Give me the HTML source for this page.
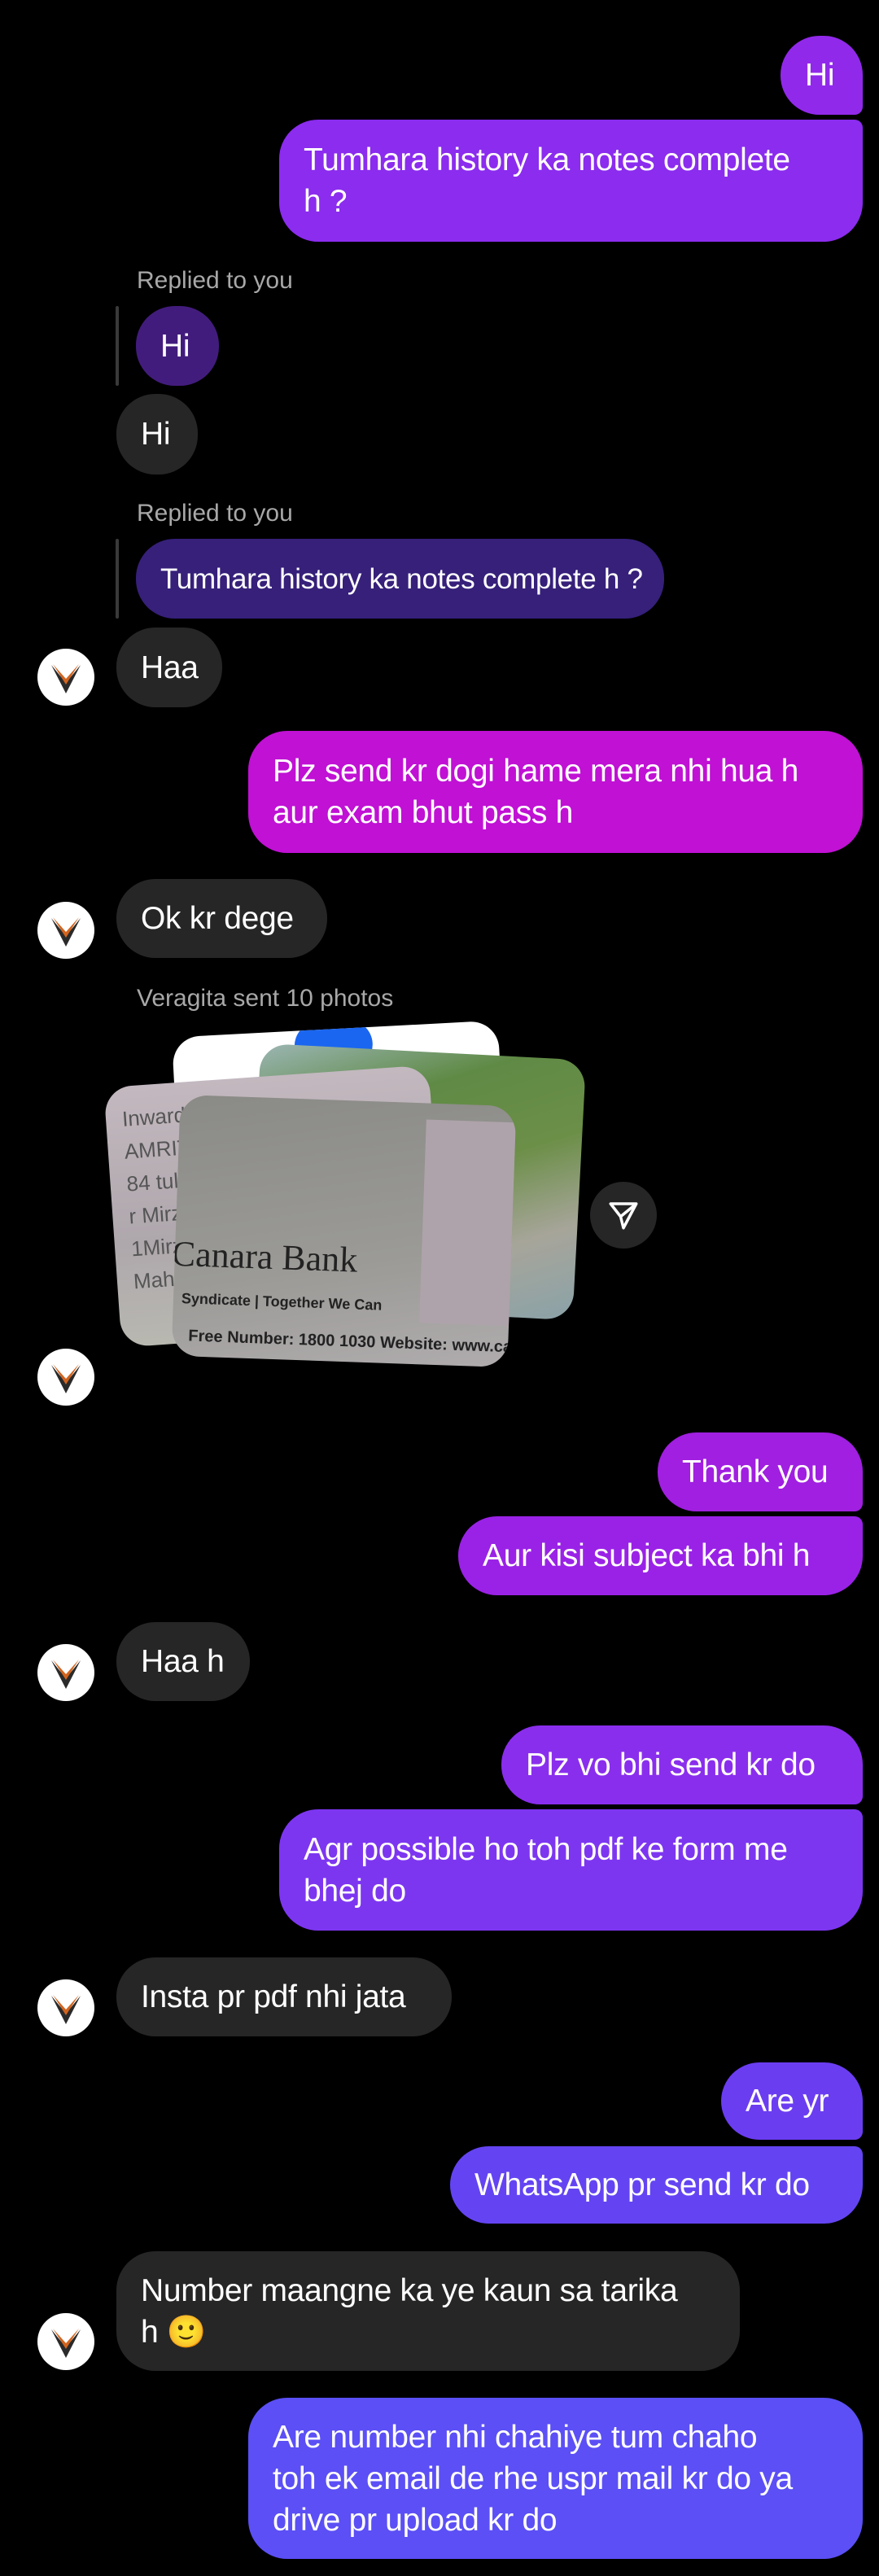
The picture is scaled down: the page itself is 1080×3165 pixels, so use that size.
<!DOCTYPE html>
<html><head><meta charset="utf-8">
<style>
html,body{margin:0;padding:0;background:#000;}
body{width:1080px;height:3165px;position:relative;overflow:hidden;font-family:"Liberation Sans",sans-serif;color:#fff;}
.b{position:absolute;box-sizing:border-box;border-radius:48px;font-size:39px;line-height:51px;padding:0 30px;display:flex;align-items:center;white-space:nowrap;letter-spacing:-0.3px}
.g{background:#262626}
.lbl{position:absolute;left:168px;font-size:30px;color:#a8a8a8}
.ln{position:absolute;left:142px;width:4px;background:#3a3a3a;border-radius:2px}
.av{position:absolute;left:46px;width:70px;height:70px}
.card{position:absolute;border-radius:34px;overflow:hidden}
</style></head><body>

<div class="b" style="left:959px;top:44px;width:101px;height:97px;background:#9129ea;border-bottom-right-radius:10px">Hi</div>
<div class="b" style="left:343px;top:147px;width:717px;height:150px;background:#8b2cee;border-top-right-radius:10px"><div>Tumhara history ka notes complete<br>h ?</div></div>

<div class="lbl" style="top:328px">Replied to you</div>
<div class="ln" style="top:376px;height:98px"></div>
<div class="b" style="left:167px;top:376px;width:102px;height:98px;background:#421c7c">Hi</div>
<div class="b g" style="left:143px;top:484px;width:100px;height:99px">Hi</div>

<div class="lbl" style="top:614px">Replied to you</div>
<div class="ln" style="top:662px;height:98px"></div>
<div class="b" style="left:167px;top:662px;width:649px;height:98px;background:#36207a;font-size:35px">Tumhara history ka notes complete h ?</div>
<div class="b g" style="left:143px;top:771px;width:130px;height:98px">Haa</div>

<div class="b" style="left:305px;top:898px;width:755px;height:150px;background:#c011d4"><div>Plz send kr dogi hame mera nhi hua h<br>aur exam bhut pass h</div></div>
<div class="b g" style="left:143px;top:1080px;width:259px;height:97px">Ok kr dege</div>

<div class="lbl" style="top:1210px">Veragita sent 10 photos</div>
<div class="card" style="left:216px;top:1264px;width:401px;height:200px;background:#fff;transform:rotate(-3deg)"><div style="position:absolute;left:150px;top:-10px;width:96px;height:60px;border-radius:48px;background:#1a66f0"></div></div>
<div class="card" style="left:312px;top:1292px;width:400px;height:320px;transform:rotate(3deg);background:linear-gradient(160deg,#9cb6b5 0%,#5f8a45 25%,#6c8f48 50%,#a7a59a 75%,#8aa2a8 100%)"></div>
<div class="card" style="left:138px;top:1322px;width:400px;height:320px;transform:rotate(-4deg);background:linear-gradient(180deg,#c3b8bf,#aea7ac 60%,#b8b8b0);color:#555;font-size:26px;padding:20px;box-sizing:border-box;line-height:40px">Inward No.<br>AMRITANS<br>84 tulasi c<br>r Mirzapu<br>1Mirzapu<br>Mahuari</div>
<div class="card" style="left:216px;top:1352px;width:413px;height:321px;transform:rotate(2deg);background:linear-gradient(170deg,#8a8a86,#9b9a96 60%,#b0acae)">
<div style="position:absolute;right:0;top:20px;width:110px;height:250px;background:#aea3aa"></div>
<div style="position:absolute;left:-4px;top:170px;font-family:'Liberation Serif',serif;font-size:44px;color:#222">Canara Bank</div>
<div style="position:absolute;left:10px;top:240px;font-size:18px;color:#222;font-weight:bold">Syndicate | Together We Can</div>
<div style="position:absolute;left:20px;top:285px;font-size:20px;color:#222;font-weight:bold;white-space:nowrap">Free Number: 1800 1030 Website: www.ca</div>
</div>
<div style="position:absolute;left:725px;top:1452px;width:82px;height:82px;border-radius:50%;background:#262626"></div>
<svg style="position:absolute;left:745px;top:1472px" width="42" height="42" viewBox="0 0 24 24" fill="none" stroke="#fff" stroke-width="2" stroke-linejoin="round"><path d="M3 4h18l-9 17-2-8z M10 13l11-9"/></svg>

<div class="b" style="left:808px;top:1760px;width:252px;height:97px;background:#a01fe0;border-bottom-right-radius:10px">Thank you</div>
<div class="b" style="left:563px;top:1863px;width:497px;height:97px;background:#9a22e6;border-top-right-radius:10px">Aur kisi subject ka bhi h</div>

<div class="b g" style="left:143px;top:1993px;width:164px;height:97px">Haa h</div>

<div class="b" style="left:616px;top:2120px;width:444px;height:97px;background:#8a2eed;border-bottom-right-radius:10px">Plz vo bhi send kr do</div>
<div class="b" style="left:343px;top:2223px;width:717px;height:149px;background:#7d36f0;border-top-right-radius:10px"><div>Agr possible ho toh pdf ke form me<br>bhej do</div></div>

<div class="b g" style="left:143px;top:2405px;width:412px;height:97px">Insta pr pdf nhi jata</div>

<div class="b" style="left:886px;top:2534px;width:174px;height:95px;background:#6b3df1;border-bottom-right-radius:10px">Are yr</div>
<div class="b" style="left:553px;top:2637px;width:507px;height:95px;background:#6444f2;border-top-right-radius:10px">WhatsApp pr send kr do</div>

<div class="b g" style="left:143px;top:2766px;width:766px;height:147px"><div>Number maangne ka ye kaun sa tarika<br>h 🙂</div></div>

<div class="b" style="left:305px;top:2946px;width:755px;height:198px;background:#5b4ff5"><div>Are number nhi chahiye tum chaho<br>toh ek email de rhe uspr mail kr do ya<br>drive pr upload kr do</div></div>

<svg width="0" height="0" style="position:absolute"><defs><g id="av"><circle cx="35" cy="35" r="35" fill="#fff"/><path d="M17 20 L35 55 L53 20 L35 42 Z" fill="#2a2a2a"/><path d="M19 19 L35 44 L51 19 L35 37 Z" fill="#d2641e"/></g></defs></svg>
<svg class="av" style="top:797px" viewBox="0 0 70 70"><use href="#av"/></svg>
<svg class="av" style="top:1108px" viewBox="0 0 70 70"><use href="#av"/></svg>
<svg class="av" style="top:1657px" viewBox="0 0 70 70"><use href="#av"/></svg>
<svg class="av" style="top:2020px" viewBox="0 0 70 70"><use href="#av"/></svg>
<svg class="av" style="top:2432px" viewBox="0 0 70 70"><use href="#av"/></svg>
<svg class="av" style="top:2842px" viewBox="0 0 70 70"><use href="#av"/></svg>
</body></html>
